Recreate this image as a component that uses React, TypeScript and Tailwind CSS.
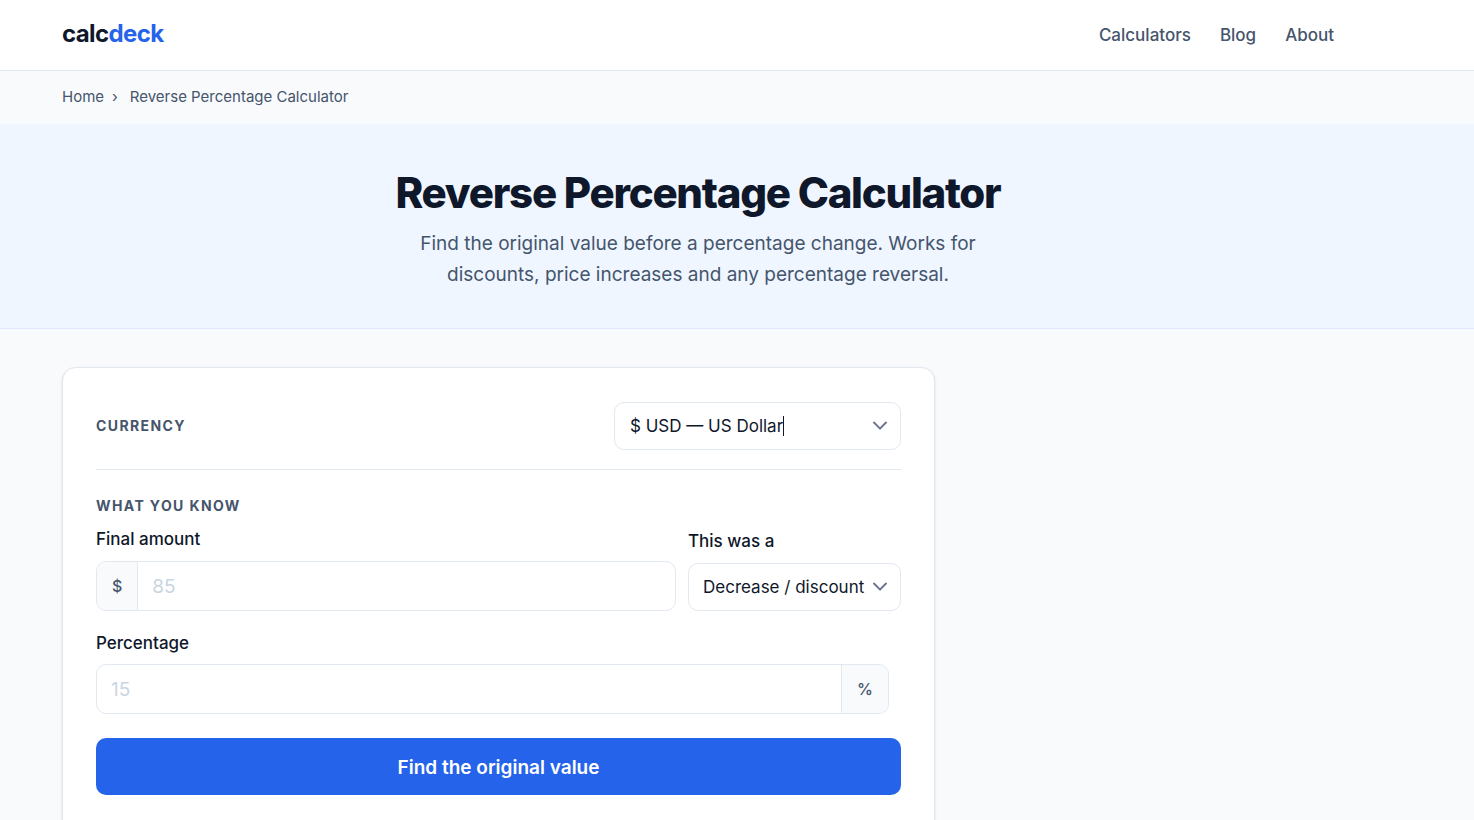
import { useState } from "react";
import type { ReactNode } from "react";

const NAV_LINKS = ["Calculators", "Blog", "About"];

function Chevron() {
  return (
    <svg
      width="16"
      height="16"
      viewBox="0 0 16 16"
      fill="none"
      stroke="#6b7290"
      strokeWidth="1.9"
      strokeLinecap="round"
      strokeLinejoin="round"
      className="pointer-events-none shrink-0"
      aria-hidden="true"
    >
      <path d="M2 4.5l6 6.2 6-6.2" />
    </svg>
  );
}

function Affix({ children, side }: { children: ReactNode; side: "left" | "right" }) {
  return (
    <span
      className={`flex items-center border-slate-200 bg-slate-50 px-[15px] text-base font-medium text-slate-600 ${
        side === "left" ? "border-r" : "border-l"
      }`}
    >
      {children}
    </span>
  );
}

export default function App() {
  const [currency, setCurrency] = useState("$ USD — US Dollar");
  const [amount, setAmount] = useState("");
  const [percent, setPercent] = useState("");
  const [direction, setDirection] = useState("decrease");

  return (
    <div className="min-h-screen bg-slate-50 font-['Inter',sans-serif] text-slate-900">
      <header className="border-b border-slate-200 bg-white">
        <div className="flex h-[70px] max-w-[1396px] items-center justify-between px-[62px]">
          <a href="#" className="pb-0.5 text-2xl leading-8 font-bold tracking-tight">
            calc<span className="text-[#2563eb]">deck</span>
          </a>
          <nav className="flex gap-[29px] pt-0.5">
            {NAV_LINKS.map((link) => (
              <a key={link} href="#" className="text-[17px] font-medium text-slate-600">
                {link}
              </a>
            ))}
          </nav>
        </div>
      </header>

      <nav
        aria-label="Breadcrumb"
        className="flex h-[53px] max-w-[1396px] items-center gap-2 px-[62px] text-[15px] text-slate-600"
      >
        <a href="#">Home</a>
        <span>›</span>
        <span className="pl-1">Reverse Percentage Calculator</span>
      </nav>

      <section className="border-b border-indigo-100 bg-[#eff6ff]">
        <div className="max-w-[1396px] px-[62px] pt-11 pb-[38px] text-center">
          <h1 className="text-[42px] leading-[50px] font-extrabold tracking-[-0.03em]">
            Reverse Percentage Calculator
          </h1>
          <p className="mx-auto mt-[10px] max-w-[600px] text-[19px] leading-[31px] text-slate-600">
            Find the original value before a percentage change. Works for discounts, price
            increases and any percentage reversal.
          </p>
        </div>
      </section>

      <main className="max-w-[1396px] px-[62px] pt-[38px]">
        <form
          onSubmit={(e) => e.preventDefault()}
          className="max-w-[873px] rounded-[14px] border border-slate-200 bg-white px-[33px] pt-[34px] pb-16 shadow-sm"
        >
          <div className="flex items-center justify-between border-b border-slate-200 pb-[19px]">
            <label
              htmlFor="currency"
              className="text-sm font-bold tracking-widest text-slate-600 uppercase"
            >
              Currency
            </label>
            <div className="flex h-12 w-[287px] items-center rounded-[10px] border border-slate-200 pr-3 pl-[15px]">
              <input
                id="currency"
                type="text"
                value={currency}
                onChange={(e) => setCurrency(e.target.value)}
                className="field-sizing-content pt-px text-[17px] outline-none"
              />
              <span className="h-5 w-px bg-slate-900" />
              <span className="ml-auto">
                <Chevron />
              </span>
            </div>
          </div>

          <fieldset>
            <legend className="pt-[26px] text-sm font-bold tracking-widest text-slate-600 uppercase">
              What you know
            </legend>
            <div className="mt-3 flex items-end gap-3">
              <div className="min-w-0 flex-1">
                <label htmlFor="amount" className="block text-[17px] leading-[22px] font-medium">
                  Final amount
                </label>
                <div className="mt-[11px] flex h-[50px] overflow-hidden rounded-[10px] border border-slate-200">
                  <Affix side="left">$</Affix>
                  <input
                    id="amount"
                    type="text"
                    inputMode="decimal"
                    placeholder="85"
                    value={amount}
                    onChange={(e) => setAmount(e.target.value)}
                    className="min-w-0 flex-1 px-[14px] pt-0.5 text-[19px] outline-none placeholder:text-slate-300"
                  />
                </div>
              </div>
              <div>
                <label htmlFor="direction" className="block text-[17px] leading-[22px] font-medium">
                  This was a
                </label>
                <div className="relative mt-[11px] w-[213px]">
                  <select
                    id="direction"
                    value={direction}
                    onChange={(e) => setDirection(e.target.value)}
                    className="h-12 w-full appearance-none rounded-[10px] border border-slate-200 bg-white pt-px pr-8 pl-[14px] text-[17px] outline-none"
                  >
                    <option value="decrease">Decrease / discount</option>
                    <option value="increase">Increase / markup</option>
                  </select>
                  <span className="pointer-events-none absolute inset-y-0 right-[13px] flex items-center">
                    <Chevron />
                  </span>
                </div>
              </div>
            </div>

            <div className="mt-[21px] pr-3">
              <label htmlFor="percent" className="block text-[17px] leading-[22px] font-medium">
                Percentage
              </label>
              <div className="mt-[10px] flex h-[50px] overflow-hidden rounded-[10px] border border-slate-200">
                <input
                  id="percent"
                  type="text"
                  inputMode="decimal"
                  placeholder="15"
                  value={percent}
                  onChange={(e) => setPercent(e.target.value)}
                  className="min-w-0 flex-1 px-[14px] pt-0.5 text-[19px] outline-none placeholder:text-slate-300"
                />
                <Affix side="right">%</Affix>
              </div>
            </div>
          </fieldset>

          <button
            type="submit"
            className="mt-6 h-[57px] w-full rounded-[10px] bg-[#2563eb] pt-[3px] text-[19px] font-semibold text-white"
          >
            Find the original value
          </button>
        </form>
      </main>
    </div>
  );
}
